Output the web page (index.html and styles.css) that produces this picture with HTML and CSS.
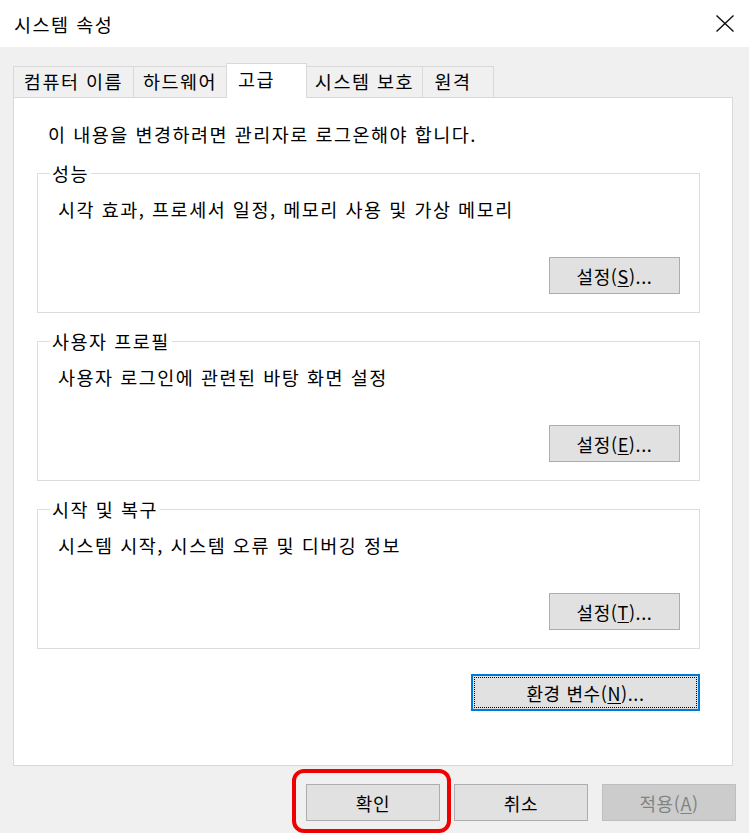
FILE: index.html
```html
<!DOCTYPE html>
<html lang="ko">
<head>
<meta charset="utf-8">
<title>시스템 속성</title>
<link rel="stylesheet" href="styles.css">
</head>
<body>
<div class="window">
  <header class="titlebar">
    <span class="title">시스템 속성</span>
    <span class="close" aria-label="닫기">
      <svg width="18" height="17" viewBox="0 0 18 17"><path d="M0.5 0.5 L17.5 16.5 M17.5 0.5 L0.5 16.5" stroke="#111" stroke-width="1.4" fill="none"/></svg>
    </span>
  </header>
  <main class="content">
    <nav class="tabs">
      <div class="tab tab-name">컴퓨터 이름</div>
      <div class="tab tab-hw">하드웨어</div>
      <div class="tab tab-adv active">고급</div>
      <div class="tab tab-prot">시스템 보호</div>
      <div class="tab tab-remote">원격</div>
    </nav>
    <section class="panel">
      <p class="intro">이 내용을 변경하려면 관리자로 로그온해야 합니다.</p>
      <fieldset class="group">
        <legend>성능</legend>
        <p class="desc">시각 효과, 프로세서 일정, 메모리 사용 및 가상 메모리</p>
        <div class="group-actions"><button class="btn">설정(<u>S</u>)...</button></div>
      </fieldset>
      <fieldset class="group">
        <legend>사용자 프로필</legend>
        <p class="desc">사용자 로그인에 관련된 바탕 화면 설정</p>
        <div class="group-actions"><button class="btn">설정(<u>E</u>)...</button></div>
      </fieldset>
      <fieldset class="group">
        <legend>시작 및 복구</legend>
        <p class="desc">시스템 시작, 시스템 오류 및 디버깅 정보</p>
        <div class="group-actions"><button class="btn">설정(<u>T</u>)...</button></div>
      </fieldset>
      <div class="env-row"><button class="btn env">환경 변수(<u>N</u>)...</button></div>
    </section>
  </main>
  <footer class="actions">
    <span class="mark-wrap"><button class="btn wide">확인</button><span class="mark"></span></span>
    <button class="btn wide">취소</button>
    <button class="btn wide" disabled>적용(<u>A</u>)</button>
  </footer>
</div>
</body>
</html>
```
FILE: styles.css
```css
* { box-sizing: border-box; }
html, body { margin: 0; padding: 0; }
body {
  width: 749px;
  height: 833px;
  overflow: hidden;
  background: #f0f0f0;
  font-family: "Noto Sans CJK KR", "Noto Sans", sans-serif;
  font-size: 18.5px;
  letter-spacing: 1.5px;
  color: #000;
}
.window { width: 749px; height: 833px; }
.titlebar {
  height: 47px;
  background: #fff;
  display: flex;
  align-items: center;
  justify-content: space-between;
  padding: 0 15px 0 14px;
}
.title { line-height: 26px; }
.close { display: flex; }
.content { padding: 15px 0 0 13px; }
.tabs {
  display: flex;
  align-items: flex-end;
  height: 35px;
}
.tab {
  height: 31px;
  line-height: 29px;
  background: #f0f0f0;
  border: 1px solid #d9d9d9;
  border-bottom: none;
  margin-right: -1px;
  text-align: center;
  white-space: nowrap;
}
.tab-name { width: 121px; }
.tab-hw { width: 94px; }
.tab-adv { width: 81px; }
.tab-prot { width: 117px; }
.tab-remote { width: 72px; padding-right: 10px; }
.tab.active {
  height: 35px;
  line-height: 30px;
  background: #fff;
  position: relative;
  z-index: 1;
  margin-bottom: -1px;
  text-align: left;
  padding-left: 11px;
}
.panel {
  width: 720px;
  height: 669px;
  background: #fff;
  border: 1px solid #d9d9d9;
  padding: 23px 32px 0 23px;
}
.intro {
  margin: 0 0 13px 11px;
  line-height: 26px;
}
.group {
  margin: 0 0 15px 0;
  padding: 10px 19px 18px 20px;
  border: 1px solid #dcdcdc;
  min-width: 0;
}
.group legend {
  padding: 0 2px;
  margin-left: -8px;
  line-height: 26px;
}
.desc { margin: 0; line-height: 26px; }
.group-actions {
  display: flex;
  justify-content: flex-end;
  margin-top: 35px;
}
.btn {
  font-family: inherit;
  font-size: 18px;
  letter-spacing: 0.6px;
  color: #000;
  background: #e1e1e1;
  border: 1px solid #adadad;
  height: 37px;
  width: 131px;
  padding: 0;
  line-height: 34px;
  text-align: center;
}
.btn u { text-underline-offset: 2px; }
.env-row {
  display: flex;
  justify-content: flex-end;
  margin-top: 25px;
}
.btn.env {
  width: 229px;
  border: 2px solid #0078d7;
  outline: 1px dotted #000;
  outline-offset: -4px;
}
.actions {
  display: flex;
  justify-content: flex-end;
  gap: 14px;
  padding: 18px 13px 0 0;
}
.btn.wide { width: 134px; height: 37px; }
.btn[disabled] {
  background: #cccccc;
  border-color: #bfbfbf;
  color: #838383;
}
.mark-wrap { position: relative; display: flex; }
.mark {
  position: absolute;
  left: -14px;
  top: -15px;
  width: 159px;
  height: 64px;
  border: 4px solid #f00000;
  border-radius: 12px;
  pointer-events: none;
}
```
